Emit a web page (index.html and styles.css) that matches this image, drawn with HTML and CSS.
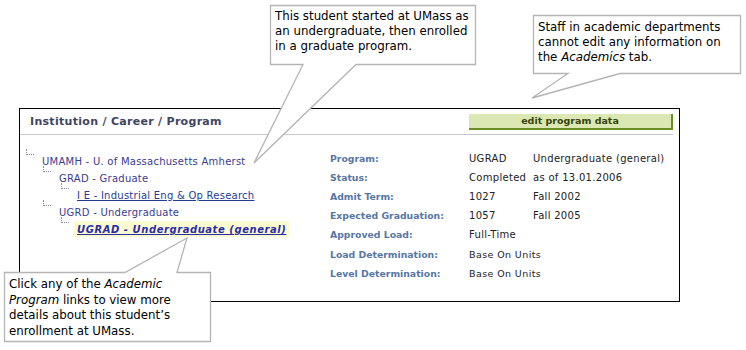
FILE: index.html
```html
<!DOCTYPE html>
<html lang="en">
<head>
    <meta charset="UTF-8">
    <title>Institution / Career / Program</title>
    <link rel="stylesheet" href="styles.css">
</head>
<body>

    <div class="panel">
        <div class="panel-head">
            <span class="panel-title">Institution / Career / Program</span>
            <span class="edit-btn">edit program data</span>
        </div>

        <div class="panel-body">
            <div class="tree">
                <div class="node lvl0"><span class="conn"></span><span>UMAMH - U. of Massachusetts Amherst</span></div>
                <div class="node lvl1"><span class="conn"></span><span>GRAD - Graduate</span></div>
                <div class="node lvl2"><span class="conn"></span><a class="prog-link">I E - Industrial Eng &amp; Op Research</a></div>
                <div class="node lvl1"><span class="conn"></span><span>UGRD - Undergraduate</span></div>
                <div class="node lvl2"><span class="conn"></span><a class="prog-link current">UGRAD - Undergraduate (general)</a></div>
            </div>

            <div class="details">
                <div class="drow"><span class="lbl">Program:</span><span class="val">UGRAD</span><span class="val">Undergraduate (general)</span></div>
                <div class="drow"><span class="lbl">Status:</span><span class="val">Completed</span><span class="val">as of 13.01.2006</span></div>
                <div class="drow"><span class="lbl">Admit Term:</span><span class="val">1027</span><span class="val">Fall 2002</span></div>
                <div class="drow"><span class="lbl">Expected Graduation:</span><span class="val">1057</span><span class="val">Fall 2005</span></div>
                <div class="drow"><span class="lbl">Approved Load:</span><span class="val">Full-Time</span></div>
                <div class="drow small gap"><span class="lbl">Load Determination:</span><span class="val">Base On Units</span></div>
                <div class="drow small"><span class="lbl">Level Determination:</span><span class="val">Base On Units</span></div>
            </div>
        </div>
    </div>

    <!-- callout bubbles drawn over the screen -->
    <svg class="bubbles" width="746" height="350" viewBox="0 0 746 350">
        <path d="M270.5 5.5 H475.5 V64.5 H356 L254 163 L303 64.5 H270.5 Z" />
        <path d="M533.5 15.5 H740.5 V73.5 H620 L532 98 L568 73.5 H533.5 Z" />
        <path d="M4.5 272.5 H125 L187 238 L177 272.5 H210.5 V341.5 H4.5 Z" />
    </svg>

    <div class="note note-top">This student started at UMass as<br>an undergraduate, then enrolled<br>in a graduate program.</div>
    <div class="note note-right">Staff in academic departments<br>cannot edit any information on<br>the <i>Academics</i> tab.</div>
    <div class="note note-left">Click any of the <i>Academic</i><br><i>Program</i> links to view more<br>details about this student’s<br>enrollment at UMass.</div>

</body>
</html>
```

FILE: styles.css
```css
* {
    margin: 0;
    padding: 0;
    box-sizing: border-box;
}

body {
    width: 746px;
    height: 350px;
    overflow: hidden;
    background: #fff;
    position: relative;
    font-family: 'DejaVu Sans', Verdana, sans-serif;
    font-size: 10px;
}

.panel {
    margin: 108px 0 0 19px;
    width: 661px;
    height: 194px;
    border: 1px solid #000;
}

.panel-head {
    display: flex;
    align-items: center;
    height: 26px;
    margin-right: 6px;
    border-bottom: 1px solid #c8c8c8;
}

.panel-title {
    padding-left: 10px;
    font-weight: bold;
    font-size: 11px;
    letter-spacing: 0.3px;
    color: #3f4560;
}

.edit-btn {
    margin-left: auto;
    width: 204px;
    height: 16px;
    line-height: 14px;
    text-align: center;
    background: #dce8b4;
    border-right: 2px solid #6a8f2a;
    border-bottom: 2px solid #6a8f2a;
    color: #34420c;
    font-weight: bold;
    font-size: 9.5px;
}

.panel-body {
    display: flex;
}

.tree {
    width: 310px;
    padding: 18px 0 0 5px;
    letter-spacing: 0.25px;
}

.node {
    display: flex;
    height: 17px;
    line-height: 17px;
    color: #3b3b8f;
    white-space: nowrap;
}

.lvl1 { padding-left: 17px; }
.lvl2 { padding-left: 35px; }

.conn {
    width: 17px;
    flex: none;
    position: relative;
}

.conn::before {
    content: "";
    position: absolute;
    left: 1px;
    top: -4px;
    width: 7px;
    height: 5px;
    border-left: 1px dotted #8a8aa8;
    border-bottom: 1px dotted #8a8aa8;
}

.prog-link {
    color: #1f3c93;
    text-decoration: underline;
}

.prog-link.current {
    margin-left: -3px;
    padding: 0 3px;
    height: 16px;
    line-height: 17px;
    background: #fbfbd2;
    color: #2b2ba8;
    font-weight: bold;
    font-style: italic;
    letter-spacing: 0.55px;
}

.details {
    padding-top: 14px;
}

.drow {
    display: grid;
    grid-template-columns: 139px 64px auto;
    height: 19px;
    line-height: 19px;
    white-space: nowrap;
}

.drow.gap {
    margin-top: 1px;
}

.lbl {
    color: #5677a4;
    font-weight: bold;
    font-size: 9.3px;
}

.val {
    color: #222;
    letter-spacing: 0.3px;
}

.drow.small .val {
    font-size: 9.5px;
    letter-spacing: 0.4px;
}

.bubbles {
    position: absolute;
    left: 0;
    top: 0;
}

.bubbles path {
    fill: #fff;
    stroke: #b4b4b4;
    stroke-width: 1.3;
}

.note {
    position: absolute;
    font-size: 11.8px;
    line-height: 15px;
    color: #000;
    white-space: nowrap;
}

.note-top {
    left: 275px;
    top: 9px;
}

.note-right {
    left: 538px;
    top: 20px;
}

.note-left {
    left: 9px;
    top: 277px;
    line-height: 15.5px;
}
```
